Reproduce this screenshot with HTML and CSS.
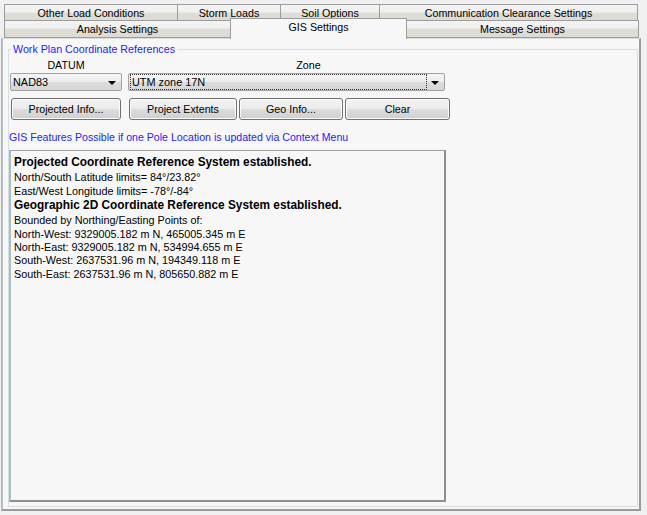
FILE: index.html
```html
<!DOCTYPE html>
<html>
<head>
<meta charset="utf-8">
<link rel="stylesheet" href="styles.css">
</head>
<body>
<div class="window">
  <div class="tabrow row1">
    <div class="tab w1">Other Load Conditions</div>
    <div class="tab w2">Storm Loads</div>
    <div class="tab w3">Soil Options</div>
    <div class="tab w4">Communication Clearance Settings</div>
  </div>
  <div class="tabrow row2">
    <div class="tab w5">Analysis Settings</div>
    <div class="tab sel w6">GIS Settings</div>
    <div class="tab w7">Message Settings</div>
  </div>
  <div class="panel">
    <div class="group">
      <div class="legend">Work Plan Coordinate References</div>
      <div class="labels">
        <div class="lab datum-lab">DATUM</div>
        <div class="lab zone-lab">Zone</div>
      </div>
      <div class="combos">
        <div class="combo datum"><span class="val">NAD83</span><span class="arrow"></span></div>
        <div class="combo zone"><span class="val focus">UTM zone 17N</span><span class="arrow"></span></div>
      </div>
      <div class="buttons">
        <div class="btn b1">Projected Info...</div>
        <div class="btn b2">Project Extents</div>
        <div class="btn b3">Geo Info...</div>
        <div class="btn b4">Clear</div>
      </div>
      <div class="note">GIS Features Possible if one Pole Location is updated via Context Menu</div>
      <div class="output">
        <div class="b">Projected Coordinate Reference System established.</div>
        <div>North/South Latitude limits= 84°/23.82°</div>
        <div>East/West Longitude limits= -78°/-84°</div>
        <div class="b">Geographic 2D Coordinate Reference System established.</div>
        <div>Bounded by Northing/Easting Points of:</div>
        <div>North-West: 9329005.182 m N, 465005.345 m E</div>
        <div class="t">North-East: 9329005.182 m N, 534994.655 m E</div>
        <div class="t">South-West: 2637531.96 m N, 194349.118 m E</div>
        <div class="t">South-East: 2637531.96 m N, 805650.882 m E</div>
      </div>
    </div>
  </div>
</div>
</body>
</html>
```
FILE: styles.css
```css
* { box-sizing: border-box; }
html, body { margin: 0; padding: 0; }
body {
  background: #f0f0f0;
  width: 647px;
  height: 515px;
  overflow: hidden;
  font-family: "Liberation Sans", "DejaVu Sans", sans-serif;
  font-size: 11px;
  color: #000;
}
.window { padding-top: 4px; position: relative; }
.tabrow { display: flex; padding-left: 4px; }
.tab {
  border: 1px solid #9c9c9c;
  border-bottom: none;
  background: linear-gradient(#f3f3f3 0, #f0f0f0 45%, #dddcd5 50%, #dcdbd4 100%);
  text-align: center;
  font-size: 10.7px;
}
.row1 .tab { height: 17px; line-height: 17px; margin-right: -1px; }
.row1 { height: 16px; }
.row2 { height: 18px; position: relative; z-index: 2; }
.row2 .tab { height: 18px; line-height: 17px; margin-right: -1px; border-bottom: 1px solid #9c9c9c; }
.row2 .tab.sel {
  background: #f7f7f7;
  border-bottom: none;
  height: 21px;
  margin-top: -2px;
  line-height: 17px;
  position: relative;
  z-index: 3;
}
.w1 { width: 174px; }
.w2 { width: 104px; }
.w3 { width: 100px; }
.w4 { width: 259px; }
.w5 { width: 227px; }
.w6 { width: 177px; }
.w7 { width: 233px; }
.panel {
  margin-left: 1px;
  width: 640px;
  height: 473px;
  background: #f7f7f7;
  border-left: 2px solid #b5b9c0;
  border-right: 2px solid #9a9a9a;
  border-bottom: 2px solid #9a9a9a;
  border-top: 1px solid #dcdcdc;
  padding: 10px 0 0 5px;
  position: relative;
  z-index: 1;
}
.group {
  width: 630px;
  height: 458px;
  border: 1px solid #d5dfe2;
  position: relative;
  padding: 8px 0 0 1px;
}
.legend {
  position: absolute;
  top: -8px;
  left: 2px;
  padding: 0 2px;
  background: #f7f7f7;
  color: #2424f0;
  font-size: 10.7px;
  line-height: 14px;
}
.labels { display: flex; height: 13px; line-height: 14px; }
.lab { text-align: center; font-size: 10.7px; }
.datum-lab { width: 112px; }
.zone-lab { width: 317px; margin-left: 6px; padding-left: 44px; }
.combos { display: flex; gap: 6px; margin-top: 2px; }
.combo {
  height: 18px;
  border: 1px solid #a2a2a2;
  border-radius: 2px;
  background: linear-gradient(#f5f5f5 0, #ececec 50%, #dcdcdc 51%, #d6d6d6 100%);
  display: flex;
  align-items: center;
  position: relative;
  font-size: 10.9px;
}
.datum { width: 112px; padding-left: 2px; }
.zone { width: 317px; padding-left: 1px; }
.val { line-height: 14px; }
.focus {
  border: 1px dotted #333;
  width: 297px;
  height: 16px;
  line-height: 14px;
  padding-left: 1px;
}
.arrow {
  position: absolute;
  right: 5px;
  top: 7px;
  width: 0; height: 0;
  border-left: 4px solid transparent;
  border-right: 4px solid transparent;
  border-top: 4px solid #000;
}
.buttons { display: flex; margin-top: 7px; margin-left: 1px; }
.btn {
  height: 22px;
  border: 1px solid #707070;
  border-radius: 3px;
  background: linear-gradient(#f2f2f2 0, #ebebeb 50%, #dddddd 51%, #cfcfcf 100%);
  box-shadow: inset 0 0 0 1px #fbfbfb;
  text-align: center;
  line-height: 20px;
  font-size: 10.7px;
}
.b1 { width: 110px; margin-right: 8px; }
.b2 { width: 108px; margin-right: 2px; }
.b3 { width: 104px; margin-right: 2px; }
.b4 { width: 105px; }
.note {
  color: #2424f0;
  margin-top: 11px;
  margin-left: -1px;
  font-size: 10.6px;
  line-height: 13px;
}
.output {
  margin-top: 6px;
  margin-left: -1px;
  width: 437px;
  height: 352px;
  border-top: 1px solid #a0a0a0;
  border-left: 2px solid #a3c1c6;
  border-right: 2px solid #8e8e8e;
  border-bottom: 2px solid #8e8e8e;
  background: #f7f7f7;
  padding: 4px 0 0 3px;
  font-size: 10.8px;
  line-height: 14px;
}
.output .b { font-weight: bold; font-size: 11.85px; line-height: 15px; }
.output .t { line-height: 13.3px; }
```
